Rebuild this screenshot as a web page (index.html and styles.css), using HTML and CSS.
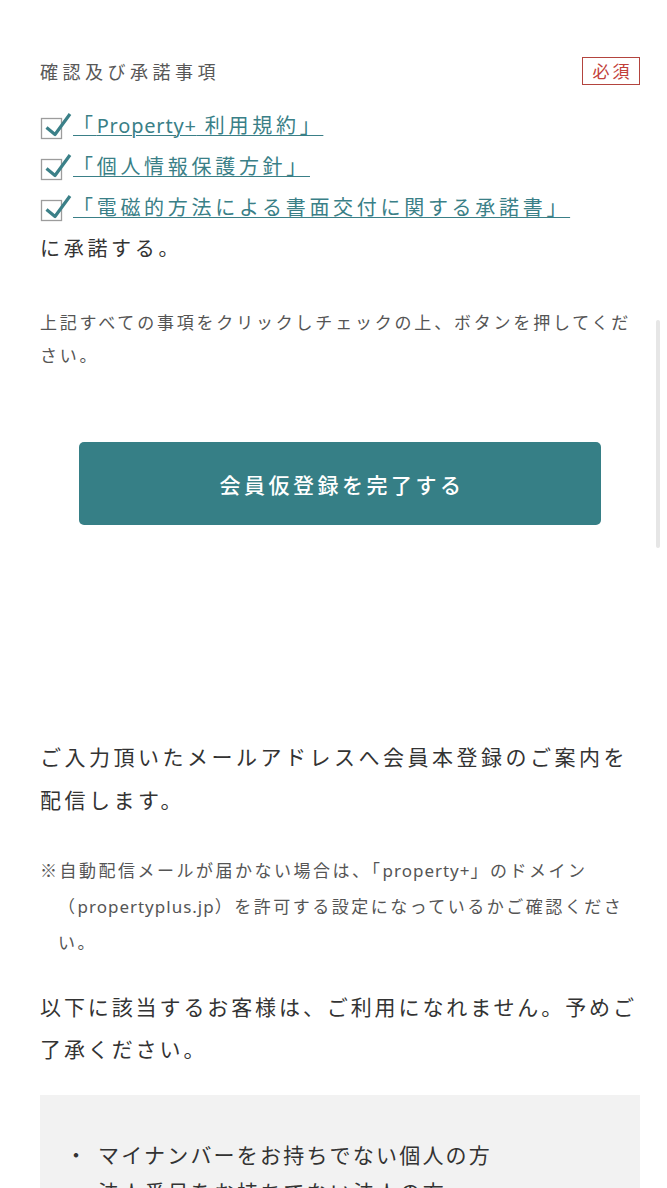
FILE: index.html
```html
<!DOCTYPE html>
<html lang="ja">
<head>
<meta charset="utf-8">
<title>会員仮登録</title>
<link rel="stylesheet" href="styles.css">
</head>
<body>
<div class="page">
  <div class="container">
    <div class="field-head">
      <span class="field-label">確認及び承諾事項</span>
      <span class="required">必須</span>
    </div>

    <div class="consent">
      <label class="check-row">
        <svg class="checkbox" viewBox="0 0 28 30" width="28" height="30" aria-hidden="true">
          <rect x="1.5" y="7.5" width="20" height="20" fill="#fff" stroke="#9c9c9c" stroke-width="1.3"/>
          <polyline points="6.5,16.5 15,23.5 30,3" fill="none" stroke="#3b8088" stroke-width="3.2" stroke-linejoin="round"/>
        </svg>
        <a class="doc-link" href="#">「<span class="en">Property+</span> 利用規約」</a>
      </label>
      <label class="check-row">
        <svg class="checkbox" viewBox="0 0 28 30" width="28" height="30" aria-hidden="true">
          <rect x="1.5" y="7.5" width="20" height="20" fill="#fff" stroke="#9c9c9c" stroke-width="1.3"/>
          <polyline points="6.5,16.5 15,23.5 30,3" fill="none" stroke="#3b8088" stroke-width="3.2" stroke-linejoin="round"/>
        </svg>
        <a class="doc-link" href="#">「個人情報保護方針」</a>
      </label>
      <label class="check-row">
        <svg class="checkbox" viewBox="0 0 28 30" width="28" height="30" aria-hidden="true">
          <rect x="1.5" y="7.5" width="20" height="20" fill="#fff" stroke="#9c9c9c" stroke-width="1.3"/>
          <polyline points="6.5,16.5 15,23.5 30,3" fill="none" stroke="#3b8088" stroke-width="3.2" stroke-linejoin="round"/>
        </svg>
        <a class="doc-link" href="#">「電磁的方法による書面交付に関する承諾書」</a>
      </label>
      <p class="consent-text">に承諾する。</p>
    </div>

    <p class="instruction">上記すべての事項をクリックしチェックの上、ボタンを押してください。</p>

    <div class="btn-wrap">
      <button class="submit" type="button">会員仮登録を完了する</button>
    </div>

    <p class="info">ご入力頂いたメールアドレスへ会員本登録のご案内を配信します。</p>

    <p class="note">※自動配信メールが届かない場合は、「<span class="en">property+</span>」のドメイン（<span class="en">propertyplus.jp</span>）を許可する設定になっているかご確認ください。</p>

    <p class="warn">以下に該当するお客様は、ご利用になれません。予めご了承ください。</p>

    <div class="notice-box">
      <ul class="notice-list">
        <li><span class="dot">・</span><span>マイナンバーをお持ちでない個人の方</span></li>
        <li><span class="dot">・</span><span>法人番号をお持ちでない法人の方</span></li>
      </ul>
    </div>
  </div>
  <div class="scroll-thumb"></div>
</div>
</body>
</html>
```

FILE: styles.css
```css
html, body {
  margin: 0;
  padding: 0;
  background: #ffffff;
}

body {
  font-family: "Noto Sans CJK JP", "Noto Sans", sans-serif;
  color: #333333;
}

.page {
  position: relative;
  width: 667px;
  height: 1188px;
  overflow: hidden;
}

.container {
  padding: 57px 27px 0 40px;
  width: 600px;
}

p {
  margin: 0;
}

.en {
  font-family: "Noto Sans", "Noto Sans CJK JP", sans-serif;
  letter-spacing: 0;
}

/* header row */
.field-head {
  display: flex;
  justify-content: space-between;
  align-items: center;
  height: 28px;
}

.field-label {
  font-size: 18px;
  letter-spacing: 4.5px;
  color: #585858;
  line-height: 28px;
}

.required {
  box-sizing: border-box;
  width: 58px;
  height: 28px;
  border: 1.5px solid #b3443e;
  color: #c2403a;
  font-size: 17px;
  letter-spacing: 3px;
  line-height: 25px;
  text-align: center;
  padding-left: 3px;
}

/* consent checkboxes */
.consent {
  margin-top: 19px;
}

.check-row {
  display: flex;
  align-items: center;
  height: 41px;
}

.checkbox {
  flex: none;
  overflow: visible;
  margin-top: 3px;
}

.doc-link {
  margin-left: 5px;
  font-size: 20px;
  letter-spacing: 3.7px;
  line-height: 41px;
  color: #3a7f87;
  text-decoration: underline;
  text-decoration-thickness: 1px;
  text-underline-offset: 2px;
}

.doc-link .en {
  letter-spacing: 0.8px;
}

.consent-text {
  font-size: 20px;
  letter-spacing: 3.7px;
  line-height: 41px;
  color: #333333;
}

/* instruction */
.instruction {
  margin-top: 37px;
  font-size: 17px;
  letter-spacing: 2.8px;
  line-height: 33px;
  color: #555555;
}

/* button */
.btn-wrap {
  margin-top: 71px;
  display: flex;
  justify-content: center;
}

.submit {
  width: 522px;
  height: 83px;
  border: none;
  border-radius: 5px;
  background: #367f86;
  color: #ffffff;
  font-family: "Noto Sans CJK JP", sans-serif;
  font-size: 21px;
  font-weight: 500;
  letter-spacing: 3.5px;
  padding: 0 0 0 4px;
}

/* info texts */
.info {
  margin-top: 210px;
  font-size: 21px;
  letter-spacing: 3.5px;
  line-height: 43px;
  color: #333333;
}

.note {
  margin-top: 31px;
  font-size: 17px;
  letter-spacing: 2.5px;
  line-height: 35px;
  color: #555555;
  padding-left: 18px;
  text-indent: -18px;
}

.note .en {
  letter-spacing: 1px;
}

.warn {
  margin-top: 26px;
  font-size: 21px;
  letter-spacing: 2.9px;
  line-height: 42px;
  color: #333333;
}

/* gray notice box */
.notice-box {
  margin-top: 26px;
  background: #f2f2f2;
  padding: 41px 20px 30px 24px;
}

.notice-list {
  list-style: none;
  margin: 0;
  padding: 0;
}

.notice-list li {
  display: flex;
  font-size: 21px;
  letter-spacing: 2.2px;
  line-height: 37px;
  color: #333333;
}

.notice-list .dot {
  flex: none;
  width: 24px;
  margin-right: 10px;
  letter-spacing: 0;
  text-align: center;
}

/* overlay scroll indicator */
.scroll-thumb {
  position: absolute;
  left: 656px;
  top: 320px;
  width: 4px;
  height: 228px;
  background: #e6e6e6;
  border-radius: 2px;
}
```
